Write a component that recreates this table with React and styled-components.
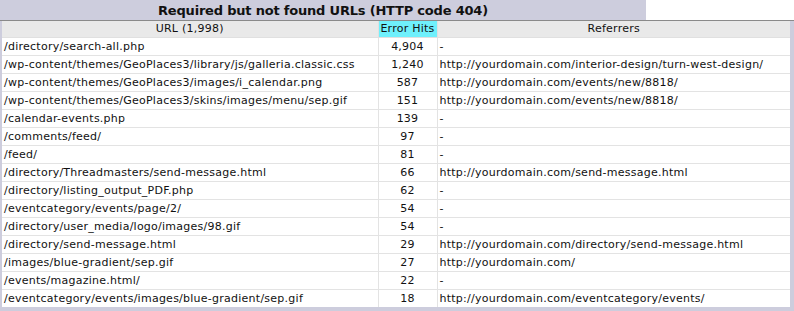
import React from "react";
import styled, { createGlobalStyle } from "styled-components";

const Global = createGlobalStyle`
  html, body { margin: 0; padding: 0; background: #ffffff; }
  body { font-family: "DejaVu Sans", Verdana, sans-serif; }
`;

const Wrapper = styled.div`
  width: 794px;
  height: 311px;
  display: flex;
  flex-direction: column;
  background: #ffffff;
`;

const TitleTab = styled.div`
  width: 646px;
  height: 20px;
  background: #cdcddd;
  color: #111;
  font-weight: bold;
  font-size: 13px;
  letter-spacing: -0.2px;
  display: flex;
  align-items: center;
  justify-content: center;
  box-sizing: border-box;
  padding-top: 1px;
`;

const Panel = styled.div`
  flex: 1;
  background: #cdcddd;
  border-top: 1px solid #8a8a8a;
  padding: 0 4px 4px 2px;
  display: flex;
  flex-direction: column;
`;

const Table = styled.table`
  width: 100%;
  border-collapse: collapse;
  background: #ffffff;
  font-size: 11px;
  line-height: 16px;
  letter-spacing: 0.25px;
  color: #111;
  table-layout: fixed;
`;

const Th = styled.th`
  font-weight: normal;
  background: ${(p) => (p.$active ? "#6ff0fc" : "#e9e9e9")};
  height: 16px;
  padding: 0;
  border-right: 1px solid #e0e0e0;
  border-bottom: 1px solid #e0e0e0;
  text-align: center;
  white-space: nowrap;
  &:last-child { border-right: none; }
`;

const Td = styled.td`
  height: 16px;
  padding: 1px 2px 0 2px;
  border-right: 1px solid #e3e3e3;
  border-bottom: 1px solid #e3e3e3;
  text-align: ${(p) => (p.$center ? "center" : "left")};
  white-space: nowrap;
  overflow: hidden;
  &:last-child { border-right: none; }
`;

const Tr = styled.tr`
  &:last-child td { border-bottom: none; }
`;

const rows = [
  ["/directory/search-all.php", "4,904", "-"],
  ["/wp-content/themes/GeoPlaces3/library/js/galleria.classic.css", "1,240", "http://yourdomain.com/interior-design/turn-west-design/"],
  ["/wp-content/themes/GeoPlaces3/images/i_calendar.png", "587", "http://yourdomain.com/events/new/8818/"],
  ["/wp-content/themes/GeoPlaces3/skins/images/menu/sep.gif", "151", "http://yourdomain.com/events/new/8818/"],
  ["/calendar-events.php", "139", "-"],
  ["/comments/feed/", "97", "-"],
  ["/feed/", "81", "-"],
  ["/directory/Threadmasters/send-message.html", "66", "http://yourdomain.com/send-message.html"],
  ["/directory/listing_output_PDF.php", "62", "-"],
  ["/eventcategory/events/page/2/", "54", "-"],
  ["/directory/user_media/logo/images/98.gif", "54", "-"],
  ["/directory/send-message.html", "29", "http://yourdomain.com/directory/send-message.html"],
  ["/images/blue-gradient/sep.gif", "27", "http://yourdomain.com/"],
  ["/events/magazine.html/", "22", "-"],
  ["/eventcategory/events/images/blue-gradient/sep.gif", "18", "http://yourdomain.com/eventcategory/events/"],
];

export default function App() {
  return (
    <>
      <Global />
      <Wrapper>
        <TitleTab>Required but not found URLs (HTTP code 404)</TitleTab>
        <Panel>
          <Table>
            <colgroup>
              <col style={{ width: "376px" }} />
              <col style={{ width: "59px" }} />
              <col />
            </colgroup>
            <thead>
              <tr>
                <Th>URL (1,998)</Th>
                <Th $active>Error Hits</Th>
                <Th>Referrers</Th>
              </tr>
            </thead>
            <tbody>
              {rows.map((r, i) => (
                <Tr key={i}>
                  <Td>{r[0]}</Td>
                  <Td $center>{r[1]}</Td>
                  <Td>{r[2]}</Td>
                </Tr>
              ))}
            </tbody>
          </Table>
        </Panel>
      </Wrapper>
    </>
  );
}
